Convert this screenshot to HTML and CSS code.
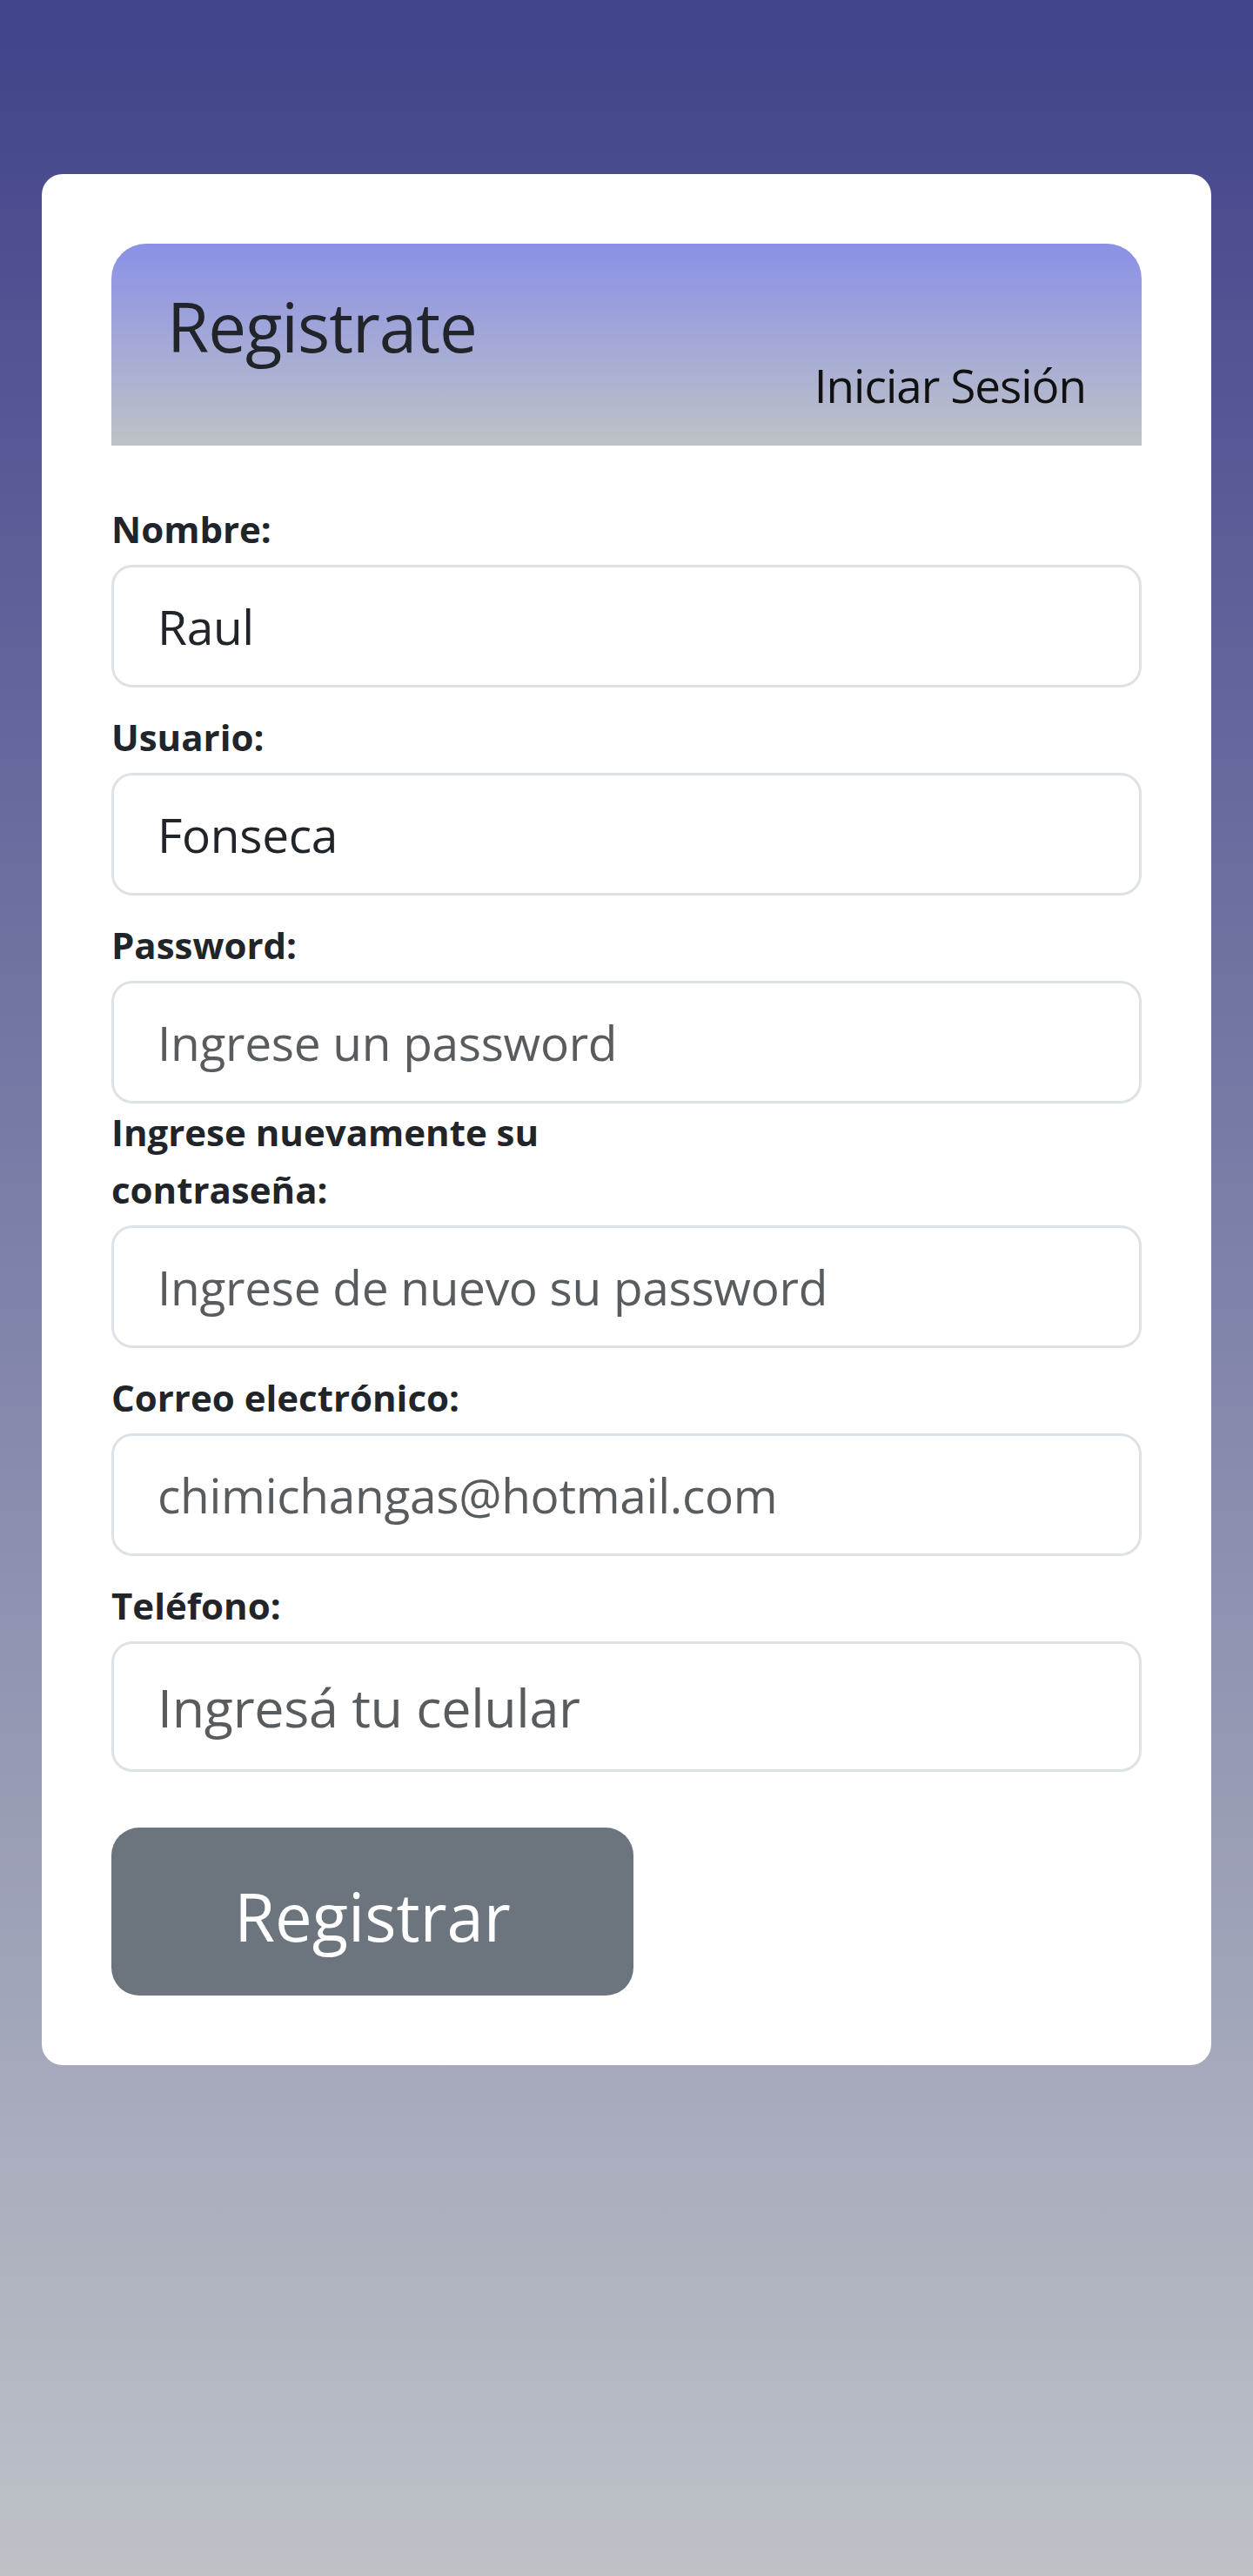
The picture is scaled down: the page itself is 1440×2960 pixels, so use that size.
FILE: index.html
```html
<!DOCTYPE html>
<html lang="es">
<head>
<meta charset="utf-8">
<title>Registrate</title>
<link rel="stylesheet" href="styles.css">
</head>
<body>
<main class="page">
  <section class="card">
    <header class="card-head">
      <h1 class="title">Registrate</h1>
      <a class="login-link" href="#">Iniciar Sesión</a>
    </header>
    <form class="form">
      <div class="field">
        <label class="label" for="nombre">Nombre:</label>
        <input class="input" id="nombre" type="text" value="Raul">
      </div>
      <div class="field">
        <label class="label" for="usuario">Usuario:</label>
        <input class="input" id="usuario" type="text" value="Fonseca">
      </div>
      <div class="field field-tight">
        <label class="label" for="pass">Password:</label>
        <input class="input" id="pass" type="password" placeholder="Ingrese un password">
      </div>
      <div class="field">
        <label class="label" for="pass2">Ingrese nuevamente su contraseña:</label>
        <input class="input" id="pass2" type="password" placeholder="Ingrese de nuevo su password">
      </div>
      <div class="field">
        <label class="label" for="mail">Correo electrónico:</label>
        <input class="input" id="mail" type="email" placeholder="chimichangas@hotmail.com">
      </div>
      <div class="field">
        <label class="label" for="tel">Teléfono:</label>
        <input class="input input-lg" id="tel" type="tel" placeholder="Ingresá tu celular">
      </div>
      <button class="btn" type="button">Registrar</button>
    </form>
  </section>
</main>
</body>
</html>
```
FILE: styles.css
```css
* { box-sizing: border-box; }

html, body {
  margin: 0;
  padding: 0;
}

body {
  min-height: 2960px;
  background: linear-gradient(to bottom, #41438b 0%, #bec2c7 100%);
  font-family: "Open Sans", "Noto Sans", sans-serif;
  color: #212529;
}

.page {
  padding: 200px 48px 0 48px;
}

.card {
  background: #ffffff;
  border-radius: 24px;
  padding: 80px;
}

.card-head {
  height: 232px;
  border-radius: 40px 40px 0 0;
  background: linear-gradient(to bottom, #8a90e6 0%, #bec2c7 100%);
  padding: 56px 64px 0 64px;
  display: flex;
  flex-direction: column;
}

.title {
  margin: 0;
  font-size: 78px;
  line-height: 78px;
  font-weight: 400;
  letter-spacing: -1px;
  color: #212529;
}

.login-link {
  margin-top: 2px;
  align-self: flex-end;
  font-size: 53px;
  line-height: 54px;
  color: #111111;
  text-decoration: none;
  letter-spacing: -1px;
}

.form {
  margin-top: 63px;
  display: flex;
  flex-direction: column;
}

.field {
  display: flex;
  flex-direction: column;
  margin-bottom: 24px;
}

.field-tight {
  margin-bottom: 0;
}

.label {
  max-width: 50%;
  font-size: 42px;
  line-height: 66px;
  font-weight: 700;
  color: #212529;
  margin-bottom: 8px;
}

.input {
  width: 100%;
  height: 141px;
  border: 3px solid #dee2e6;
  border-radius: 24px;
  padding: 0 50px;
  font-family: "Open Sans", "Noto Sans", sans-serif;
  font-size: 55px;
  letter-spacing: -0.3px;
  color: #212529;
  background: #ffffff;
  outline: none;
}

.input::placeholder {
  color: rgba(33, 37, 41, 0.75);
  opacity: 1;
}

.input-lg {
  height: 150px;
  font-size: 61px;
}

.btn {
  margin-top: 40px;
  width: 600px;
  height: 193px;
  border: none;
  border-radius: 32px;
  background: #6c757d;
  color: #ffffff;
  font-family: "Open Sans", "Noto Sans", sans-serif;
  font-size: 76px;
  padding: 9px 0 0 0;
  display: flex;
  align-items: center;
  justify-content: center;
  cursor: pointer;
}
```
